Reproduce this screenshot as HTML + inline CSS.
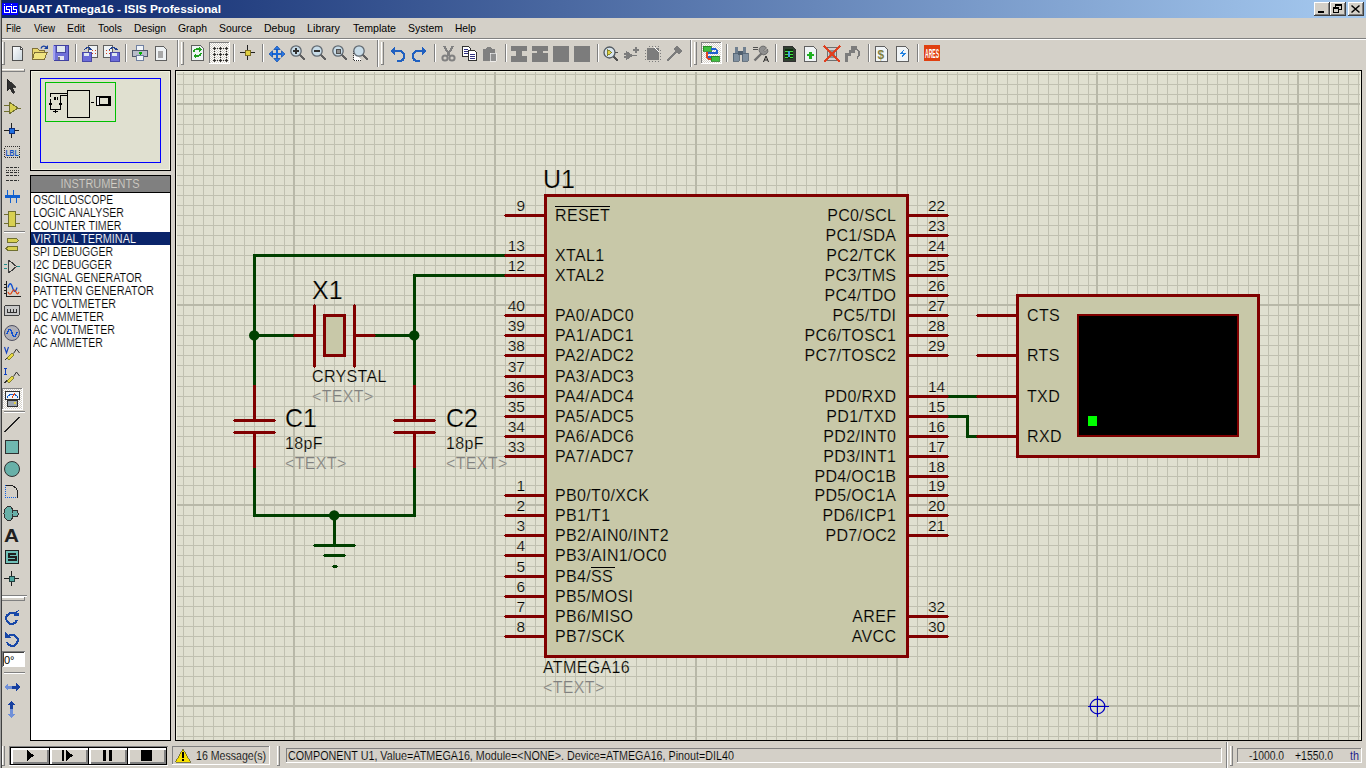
<!DOCTYPE html>
<html><head><meta charset="utf-8"><title>UART ATmega16 - ISIS Professional</title>
<style>html,body{margin:0;padding:0;width:1366px;height:768px;overflow:hidden;background:#D4D0C8}
svg{display:block} text{font-family:"Liberation Sans",sans-serif}</style></head>
<body><svg width="1366" height="768" viewBox="0 0 1366 768" shape-rendering="crispEdges">
<rect x="0" y="0" width="1366" height="768" fill="#D4D0C8" />
<defs><linearGradient id="tg" x1="0" x2="1" y1="0" y2="0"><stop offset="0" stop-color="#0A246A"/><stop offset="1" stop-color="#A6CAF0"/></linearGradient></defs>
<rect x="2" y="0" width="1364" height="18" fill="url(#tg)" />
<rect x="0" y="0" width="1" height="768" fill="#A0A0A0"/>
<rect x="1" y="0" width="1" height="768" fill="#404040"/>
<rect x="2" y="3" width="16" height="12" fill="#0000FF" />
<path d="M4 4h1v1h-1zM11 4h1v1h-1zM4 6h1v7h-1zM4 12h6v1h-6zM6 6h6v1h-6zM6 6h1v4h-1zM6 9h4v1h-4zM9 9h1v4h-1zM11 6h1v7h-1zM11 12h6v1h-6zM13 6h4v1h-4zM13 6h1v4h-1zM13 9h4v1h-4zM16 9h1v4h-1z" fill="#fff"/>
<text x="19" y="13" font-size="11" fill="#FFFFFF" text-anchor="start" font-weight="bold" textLength="202" lengthAdjust="spacingAndGlyphs" >UART ATmega16 - ISIS Professional</text>
<rect x="1314" y="2" width="16" height="14" fill="#D4D0C8" />
<rect x="1314" y="2" width="15" height="1" fill="#FFFFFF"/>
<rect x="1314" y="2" width="1" height="13" fill="#FFFFFF"/>
<rect x="1314" y="15" width="16" height="1" fill="#404040"/>
<rect x="1329" y="2" width="1" height="14" fill="#404040"/>
<rect x="1315" y="14" width="14" height="1" fill="#808080"/>
<rect x="1328" y="3" width="1" height="12" fill="#808080"/>
<rect x="1330" y="2" width="16" height="14" fill="#D4D0C8" />
<rect x="1330" y="2" width="15" height="1" fill="#FFFFFF"/>
<rect x="1330" y="2" width="1" height="13" fill="#FFFFFF"/>
<rect x="1330" y="15" width="16" height="1" fill="#404040"/>
<rect x="1345" y="2" width="1" height="14" fill="#404040"/>
<rect x="1331" y="14" width="14" height="1" fill="#808080"/>
<rect x="1344" y="3" width="1" height="12" fill="#808080"/>
<rect x="1348" y="2" width="16" height="14" fill="#D4D0C8" />
<rect x="1348" y="2" width="15" height="1" fill="#FFFFFF"/>
<rect x="1348" y="2" width="1" height="13" fill="#FFFFFF"/>
<rect x="1348" y="15" width="16" height="1" fill="#404040"/>
<rect x="1363" y="2" width="1" height="14" fill="#404040"/>
<rect x="1349" y="14" width="14" height="1" fill="#808080"/>
<rect x="1362" y="3" width="1" height="12" fill="#808080"/>
<rect x="1318" y="11" width="6" height="2" fill="#000"/>
<path d="M1335 4h7v2h-7zM1341 6h1v4h-3v-1h2zM1335 6h1v1h-1zM1333 7h6v2h-6zM1333 9h1v4h-1zM1338 9h1v4h-1zM1333 12h6v1h-6z" fill="#000"/>
<path d="M1351.5 5.5l8 7M1359.5 5.5l-8 7" stroke="#000" stroke-width="1.5" shape-rendering="auto"/>
<text x="6" y="32" font-size="11" fill="#000" text-anchor="start" font-weight="normal" textLength="15" lengthAdjust="spacingAndGlyphs" >File</text>
<text x="34" y="32" font-size="11" fill="#000" text-anchor="start" font-weight="normal" textLength="21" lengthAdjust="spacingAndGlyphs" >View</text>
<text x="67" y="32" font-size="11" fill="#000" text-anchor="start" font-weight="normal" textLength="18" lengthAdjust="spacingAndGlyphs" >Edit</text>
<text x="98" y="32" font-size="11" fill="#000" text-anchor="start" font-weight="normal" textLength="24" lengthAdjust="spacingAndGlyphs" >Tools</text>
<text x="134" y="32" font-size="11" fill="#000" text-anchor="start" font-weight="normal" textLength="32" lengthAdjust="spacingAndGlyphs" >Design</text>
<text x="178" y="32" font-size="11" fill="#000" text-anchor="start" font-weight="normal" textLength="29" lengthAdjust="spacingAndGlyphs" >Graph</text>
<text x="219" y="32" font-size="11" fill="#000" text-anchor="start" font-weight="normal" textLength="33" lengthAdjust="spacingAndGlyphs" >Source</text>
<text x="264" y="32" font-size="11" fill="#000" text-anchor="start" font-weight="normal" textLength="31" lengthAdjust="spacingAndGlyphs" >Debug</text>
<text x="307" y="32" font-size="11" fill="#000" text-anchor="start" font-weight="normal" textLength="33" lengthAdjust="spacingAndGlyphs" >Library</text>
<text x="353" y="32" font-size="11" fill="#000" text-anchor="start" font-weight="normal" textLength="43" lengthAdjust="spacingAndGlyphs" >Template</text>
<text x="408" y="32" font-size="11" fill="#000" text-anchor="start" font-weight="normal" textLength="35" lengthAdjust="spacingAndGlyphs" >System</text>
<text x="455" y="32" font-size="11" fill="#000" text-anchor="start" font-weight="normal" textLength="21" lengthAdjust="spacingAndGlyphs" >Help</text>
<rect x="2" y="38" width="1364" height="1" fill="#808080"/>
<rect x="2" y="39" width="1364" height="1" fill="#FFFFFF"/>
<rect x="2" y="42" width="1" height="23" fill="#FFFFFF"/>
<rect x="4" y="42" width="1" height="23" fill="#808080"/>
<rect x="2" y="64" width="3" height="1" fill="#808080"/>
<g transform="translate(11,46)"><defs><linearGradient id="dg" x1="0" y1="0" x2="1" y2="1"><stop offset="0" stop-color="#FFFFFF"/><stop offset="1" stop-color="#C8D4DC"/></linearGradient></defs><path d="M1.5 0.5h7.5l2.5 2.5v11.5h-10z" fill="url(#dg)" stroke="#505050"/><path d="M9 1v2.5h2.5" fill="none" stroke="#505050"/><rect x="9.5" y="1.5" width="1" height="1" fill="#fff"/></g>
<g transform="translate(32,45)"><path d="M0.5 3.5h5l1.5 1.5h5.5v9h-12z" fill="#E8D870" stroke="#807038"/><path d="M2.5 7.5h12.5l-2.5 7h-12z" fill="#F0E480" stroke="#807038"/><path d="M9 3.5C10 0.5 13 0.5 14.5 2.5" stroke="#1840A0" fill="none" stroke-width="1.3" shape-rendering="auto"/><path d="M12 4h4v-4z" fill="#1840A0" shape-rendering="auto"/></g>
<g transform="translate(53,45)"><path d="M0 0h16v16h-15l-1-1z" fill="#7070D8"/><path d="M0 0h1.5v15h-1.5z" fill="#A0A0F0"/><rect x="3.5" y="0.5" width="9" height="7" fill="#E0E8EE" stroke="#4848A0"/><rect x="4.5" y="11" width="6" height="5" fill="#E8E8F0"/><rect x="5" y="12" width="2" height="3" fill="#707080"/><path d="M0.5 0.5h15v15h-14.5" fill="none" stroke="#4040A0"/></g>
<rect x="75" y="44" width="1" height="18" fill="#808080"/>
<rect x="76" y="44" width="1" height="18" fill="#FFFFFF"/>
<g transform="translate(82,45)"><rect x="6.5" y="0.5" width="9" height="12" fill="#EEF2F4" stroke="#606060"/><g fill="#D04020"><rect x="10" y="5" width="1" height="1"/><rect x="13" y="5" width="1" height="1"/><rect x="10" y="8" width="1" height="1"/><rect x="13" y="8" width="1" height="1"/></g><path d="M0 7h9v9h-9z" fill="#6C6CD8" stroke="#4848A8"/><rect x="2" y="8" width="5" height="3" fill="#E0E8F0"/><path d="M2 5c2-3 5-3 7-1" stroke="#204090" fill="none" stroke-width="1.3"/><path d="M8 2l2 3h-3z" fill="#204090"/></g>
<g transform="translate(103,45)"><rect x="0.5" y="0.5" width="9" height="12" fill="#EEF2F4" stroke="#606060"/><g fill="#D04020"><rect x="3" y="5" width="1" height="1"/><rect x="6" y="5" width="1" height="1"/><rect x="3" y="8" width="1" height="1"/><rect x="6" y="8" width="1" height="1"/></g><path d="M7 7h9v9h-9z" fill="#6C6CD8" stroke="#4848A8"/><rect x="9" y="8" width="5" height="3" fill="#E0E8F0"/><path d="M6 5c2-3 5-3 7-1" stroke="#204090" fill="none" stroke-width="1.3"/><path d="M14 2l1 3h-3z" fill="#204090"/></g>
<rect x="125" y="44" width="1" height="18" fill="#808080"/>
<rect x="126" y="44" width="1" height="18" fill="#FFFFFF"/>
<g transform="translate(132,45)"><rect x="4.5" y="0.5" width="7" height="5" fill="#F0F4F8" stroke="#7080A0"/><rect x="0.5" y="5.5" width="15" height="6" fill="#B8BCC8" stroke="#505868"/><rect x="4.5" y="10.5" width="7" height="5" fill="#F0F4F8" stroke="#7080A0"/><path d="M7 8h3M8.5 6.5v3" stroke="#00B000" stroke-width="1.4"/></g>
<g transform="translate(155,46)"><path d="M0.5 0.5h8l3 3v11h-11z" fill="#EEF2F4" stroke="#606060"/><rect x="3" y="5" width="5" height="7" fill="#A8A8A8"/></g>
<rect x="177" y="40" width="1" height="27" fill="#808080"/>
<rect x="178" y="40" width="1" height="27" fill="#FFFFFF"/>
<rect x="181" y="42" width="1" height="23" fill="#FFFFFF"/>
<rect x="183" y="42" width="1" height="23" fill="#808080"/>
<rect x="181" y="64" width="3" height="1" fill="#808080"/>
<g transform="translate(191,45)"><path d="M0.5 0.5h9l3 3v12h-12z" fill="#EEF4F6" stroke="#606060"/><path d="M3 7c0-3 4-4 6-2M10 8c0 3-4 4-6 2" stroke="#20A020" fill="none" stroke-width="1.6"/><path d="M8 2l3 3l-3 2z M5 9l-3 2l3 2z" fill="#20A020"/></g>
<g transform="translate(209,42)"><defs><pattern id="dith" width="2" height="2" patternUnits="userSpaceOnUse"><rect width="2" height="2" fill="#D4D0C8"/><rect width="1" height="1" fill="#fff"/><rect x="1" y="1" width="1" height="1" fill="#fff"/></pattern></defs><rect x="0" y="0" width="21" height="22" fill="url(#dith)"/><path d="M0 0.5h20.5M0.5 0v21.5" stroke="#808080"/><path d="M0 21.5h21M20.5 0v22" stroke="#fff"/></g>
<g fill="#303030"><rect x="213" y="48" width="3" height="1"/><rect x="214" y="47" width="1" height="3"/><rect x="213" y="54" width="3" height="1"/><rect x="214" y="53" width="1" height="3"/><rect x="213" y="60" width="3" height="1"/><rect x="214" y="59" width="1" height="3"/><rect x="219" y="48" width="3" height="1"/><rect x="220" y="47" width="1" height="3"/><rect x="219" y="54" width="3" height="1"/><rect x="220" y="53" width="1" height="3"/><rect x="219" y="60" width="3" height="1"/><rect x="220" y="59" width="1" height="3"/><rect x="225" y="48" width="3" height="1"/><rect x="226" y="47" width="1" height="3"/><rect x="225" y="54" width="3" height="1"/><rect x="226" y="53" width="1" height="3"/><rect x="225" y="60" width="3" height="1"/><rect x="226" y="59" width="1" height="3"/><rect x="214" y="51" width="1" height="1"/><rect x="217" y="48" width="1" height="1"/><rect x="223" y="48" width="1" height="1"/><rect x="214" y="57" width="1" height="1"/><rect x="220" y="51" width="1" height="1"/><rect x="217" y="54" width="1" height="1"/><rect x="223" y="54" width="1" height="1"/><rect x="220" y="57" width="1" height="1"/><rect x="226" y="51" width="1" height="1"/><rect x="217" y="60" width="1" height="1"/><rect x="223" y="60" width="1" height="1"/><rect x="226" y="57" width="1" height="1"/></g>
<rect x="233" y="44" width="1" height="18" fill="#808080"/>
<rect x="234" y="44" width="1" height="18" fill="#FFFFFF"/>
<g transform="translate(240,45)"><path d="M0 7.5h15M7.5 0v15" stroke="#202020"/><rect x="5" y="5" width="5" height="5" fill="#E0D040" stroke="#807020"/></g>
<rect x="262" y="44" width="1" height="18" fill="#808080"/>
<rect x="263" y="44" width="1" height="18" fill="#FFFFFF"/>
<g transform="translate(269,46)"><path d="M3 7h9v2h-9zM7 3h2v9h-2z" fill="#1868D8"/><path d="M8 0l3.2 3.5h-6.4zM8 16l3.2-3.5h-6.4zM0 8l3.5-3.2v6.4zM16 8l-3.5-3.2v6.4z" fill="#2878E8" stroke="#0848A8" stroke-width="0.7" shape-rendering="auto"/></g>
<g transform="translate(290,45)"><path d="M10 10l5 5" stroke="#606060" stroke-width="2.5"/><circle shape-rendering="auto" cx="6" cy="6" r="5.2" fill="#C8DCE8" stroke="#606870" stroke-width="1.3"/><path d="M3 6h6M6 3v6" stroke="#303030" stroke-width="1.5"/></g>
<g transform="translate(311,45)"><path d="M10 10l5 5" stroke="#606060" stroke-width="2.5"/><circle shape-rendering="auto" cx="6" cy="6" r="5.2" fill="#C8DCE8" stroke="#606870" stroke-width="1.3"/><path d="M3 6h6" stroke="#303030" stroke-width="1.5"/></g>
<g transform="translate(332,45)"><path d="M10 10l5 5" stroke="#606060" stroke-width="2.5"/><circle shape-rendering="auto" cx="6" cy="6" r="5.2" fill="#C8DCE8" stroke="#606870" stroke-width="1.3"/><rect x="4" y="4" width="4" height="4" fill="#909090" stroke="#505050"/></g>
<g transform="translate(353,45)"><path d="M0.5 5.5v10h8" fill="#fff" stroke="#303030" stroke-dasharray="1 1"/><path d="M10 10l5 5" stroke="#606060" stroke-width="2.5"/><circle shape-rendering="auto" cx="6" cy="6" r="5.2" fill="#C8DCE8" stroke="#606870" stroke-width="1.3"/></g>
<rect x="377" y="40" width="1" height="27" fill="#808080"/>
<rect x="378" y="40" width="1" height="27" fill="#FFFFFF"/>
<rect x="381" y="42" width="1" height="23" fill="#FFFFFF"/>
<rect x="383" y="42" width="1" height="23" fill="#808080"/>
<rect x="381" y="64" width="3" height="1" fill="#808080"/>
<g transform="translate(390,46)"><g ><path d="M3 5h6c3 0 5 2 5 5c0 3-2 5-5 5h-2" fill="none" stroke="#2060C0" stroke-width="2.4"/><path d="M0 5l5-4v8z" fill="#2060C0"/></g></g>
<g transform="translate(411,46)"><g transform="translate(16,0) scale(-1,1)"><path d="M3 5h6c3 0 5 2 5 5c0 3-2 5-5 5h-2" fill="none" stroke="#2060C0" stroke-width="2.4"/><path d="M0 5l5-4v8z" fill="#2060C0"/></g></g>
<rect x="434" y="44" width="1" height="18" fill="#808080"/>
<rect x="435" y="44" width="1" height="18" fill="#FFFFFF"/>
<g transform="translate(441,46)"><path d="M3 0l6 10M12 0l-6 10" stroke="#808080" stroke-width="2.2"/><circle shape-rendering="auto" cx="4" cy="12" r="2.6" fill="none" stroke="#808080" stroke-width="2"/><circle shape-rendering="auto" cx="11" cy="12" r="2.6" fill="none" stroke="#808080" stroke-width="2"/></g>
<g transform="translate(462,46)"><path d="M0.5 0.5h6l2 2v8h-8z" fill="#fff" stroke="#303030"/><path d="M6.5 4.5h6l2 2v8h-8z" fill="#fff" stroke="#303030"/><path d="M2 3h4M2 5h4M2 7h4M8 8h5M8 10h5M8 12h5" stroke="#303080"/></g>
<g transform="translate(482,46)"><path d="M1 3h3l1-2h4l1 2h3v12h-12z" fill="#808080"/><path d="M8 7h6v8h-6z" fill="#909090" stroke="#fff" stroke-width="0.6"/></g>
<rect x="505" y="44" width="1" height="18" fill="#808080"/>
<rect x="506" y="44" width="1" height="18" fill="#FFFFFF"/>
<g transform="translate(511,46)"><path d="M0 0h16v5h-5v5h5v6h-16v-6h5v-5h-5z" fill="#7C7C7C"/></g>
<g transform="translate(532,46)"><path d="M0 0h16v5h-5v2h5v9h-16v-9h5v-2h-5z" fill="#7C7C7C"/></g>
<g transform="translate(553,46)"><path d="M0 0h16v16h-16z" fill="#7C7C7C"/></g>
<g transform="translate(574,46)"><path d="M0 0h16v16h-16z" fill="#7C7C7C"/></g>
<rect x="597" y="44" width="1" height="18" fill="#808080"/>
<rect x="598" y="44" width="1" height="18" fill="#FFFFFF"/>
<g transform="translate(603,46)"><path d="M10 10l5 5" stroke="#505050" stroke-width="2.4"/><circle shape-rendering="auto" cx="6.5" cy="6.5" r="5.5" fill="#D8E4EC" stroke="#505860" stroke-width="1.3"/><path d="M4 3.5v6l5-3z" fill="#E0D040" stroke="#707020" stroke-width="0.8"/><path d="M12 6.5h3" stroke="#505050"/></g>
<g transform="translate(624,46)"><path d="M2 5v9l8-4.5z" fill="#7C7C7C"/><path d="M0 8h3M0 11h3M10 9.5h3M12 1v6M9 4h6" stroke="#7C7C7C" stroke-width="1.6"/></g>
<g transform="translate(645,46)"><rect x="2" y="2" width="12" height="12" fill="#7C7C7C"/><path d="M0 4h16M0 7h16M0 10h16M0 13h16M4 0v16M7 0v16M10 0v16M13 0v16" stroke="#7C7C7C" stroke-dasharray="1 2"/><path d="M9 1l5 5" stroke="#fff" stroke-width="1"/></g>
<g transform="translate(666,46)"><path d="M1 15l10-10" stroke="#7C7C7C" stroke-width="2.6"/><path d="M7 3l4-3l5 5l-3 4z" fill="#7C7C7C"/></g>
<rect x="690" y="40" width="1" height="27" fill="#808080"/>
<rect x="691" y="40" width="1" height="27" fill="#FFFFFF"/>
<rect x="694" y="42" width="1" height="23" fill="#FFFFFF"/>
<rect x="696" y="42" width="1" height="23" fill="#808080"/>
<rect x="694" y="64" width="3" height="1" fill="#808080"/>
<g transform="translate(701,42)"><rect x="0" y="0" width="21" height="22" fill="url(#dith)"/><path d="M0 0.5h20.5M0.5 0v21.5" stroke="#808080"/><path d="M0 21.5h21M20.5 0v22" stroke="#fff"/></g>
<g transform="translate(703,45)"><rect x="0" y="1" width="8" height="5" fill="#40C040" stroke="#208020" stroke-width="0.8"/><rect x="8" y="11" width="8" height="5" fill="#40C040" stroke="#208020" stroke-width="0.8"/><path d="M8 4h4a2 2 0 0 1 2 2v2h-8a2 2 0 0 0-2 2v2h4" fill="none" stroke="#2060D0" stroke-width="1.5"/><path d="M4 7v5a2 2 0 0 0 2 2h2" fill="none" stroke="#E04020" stroke-width="1.5"/></g>
<rect x="726" y="44" width="1" height="18" fill="#808080"/>
<rect x="727" y="44" width="1" height="18" fill="#FFFFFF"/>
<g transform="translate(733,46)"><path d="M2 1h3v6h-3zM10 1h3v6h-3z" fill="#708090"/><path d="M0 7h6v8h-6zM9 7h6v8h-6z" fill="#8090A0" stroke="#506070" stroke-width="0.8"/><rect x="5" y="5" width="5" height="4" fill="#506070"/></g>
<g transform="translate(753,46)"><path d="M0 1.5h5M0 3.5h5" stroke="#505050"/><path d="M1.5 14.5l7-7" stroke="#707070" stroke-width="2.4" shape-rendering="auto"/><path d="M8 7.5a4 4 0 1 1 5.5-5.5l-2.5 2.5l1 1l2.5-2.5a4 4 0 0 1-6.5 4.5z" fill="#909090" stroke="#606060" stroke-width="0.8" shape-rendering="auto"/><path d="M10.5 16l2.5-6l2.5 6M11.5 14h3" stroke="#202020" fill="none" shape-rendering="auto"/></g>
<rect x="775" y="44" width="1" height="18" fill="#808080"/>
<rect x="776" y="44" width="1" height="18" fill="#FFFFFF"/>
<g transform="translate(783,46)"><path d="M0.5 0.5h9l3 3v12h-12z" fill="#304030" stroke="#303030"/><rect x="2" y="3" width="8" height="10" fill="#103010"/><path d="M2 5h3M2 8h8M2 11h3M7 5h3M7 11h3" stroke="#40E040"/><rect x="5" y="5" width="2" height="6" fill="#40A0E0"/></g>
<g transform="translate(804,46)"><path d="M0.5 0.5h9l3 3v12h-12z" fill="#F0F4F6" stroke="#606060"/><path d="M3 9h7M6.5 5.5v7" stroke="#20B020" stroke-width="2.2"/></g>
<g transform="translate(824,46)"><rect x="3.5" y="1.5" width="9" height="13" fill="#D0D0D0" stroke="#707070"/><rect x="5" y="4" width="6" height="8" fill="#909090"/><path d="M0 0l16 16M16 0l-16 16" stroke="#E04020" stroke-width="1.8"/></g>
<g transform="translate(845,46)"><path d="M6 0h6v4h-2v3h-4v3h-3v6h-3v-9h4v-3h2z" fill="#7C7C7C"/><path d="M12 4c3 1 3 6 0 8" stroke="#7C7C7C" fill="none" stroke-width="1.5"/></g>
<rect x="868" y="44" width="1" height="18" fill="#808080"/>
<rect x="869" y="44" width="1" height="18" fill="#FFFFFF"/>
<g transform="translate(875,46)"><path d="M0.5 0.5h9l3 3v12h-12z" fill="#F0F4F6" stroke="#606060"/><text x="2.5" y="13" font-size="12" font-weight="bold" fill="#808040" font-family="Liberation Sans">$</text></g>
<g transform="translate(896,46)"><path d="M0.5 0.5h9l3 3v12h-12z" fill="#F0F4F6" stroke="#606060"/><path d="M8 3l-4 5h3l-2 5l5-6h-3z" fill="#2080E0"/></g>
<rect x="917" y="44" width="1" height="18" fill="#808080"/>
<rect x="918" y="44" width="1" height="18" fill="#FFFFFF"/>
<g transform="translate(924,45)"><rect x="0" y="0" width="16" height="16" fill="#E04010"/><text x="8" y="13" font-size="12" font-weight="bold" fill="#fff" text-anchor="middle" font-family="Liberation Sans" textLength="14" lengthAdjust="spacingAndGlyphs">ARES</text></g>
<rect x="2" y="69" width="23" height="1" fill="#FFFFFF"/>
<rect x="2" y="71" width="23" height="1" fill="#808080"/>
<rect x="24" y="69" width="1" height="3" fill="#808080"/>
<g transform="translate(4,79)"><path d="M3 0v12l3-3l2.5 5l2-1l-2.5-5h4z" fill="#303030" stroke="#202020" stroke-width="0.8"/></g>
<g transform="translate(4,101)"><path d="M5 1v12l9-6z" fill="#D8D050" stroke="#707030"/><path d="M0 4h5M0 10h5M14 7h3" stroke="#707030"/></g>
<g transform="translate(4,123)"><path d="M0 7.5h15M7.5 0v15" stroke="#202020"/><rect x="5" y="5" width="5" height="5" fill="#2070E0" stroke="#103080"/></g>
<g transform="translate(4,146)"><rect x="0.5" y="0.5" width="15" height="11" fill="none" stroke="#303030" stroke-dasharray="1 1"/><text x="8" y="10" font-size="9" font-weight="bold" fill="#1050C0" text-anchor="middle" font-family="Liberation Sans" textLength="13" lengthAdjust="spacingAndGlyphs">LBL</text></g>
<g transform="translate(5,166)"><path d="M1 1.5h13M1 6.5h13M1 9.5h13M1 14.5h13" stroke="#303030" stroke-width="1.2" stroke-dasharray="3 1"/><path d="M1 4h13" stroke="#303030" stroke-width="1" stroke-dasharray="1 1"/></g>
<g transform="translate(4,190)"><rect x="1" y="5" width="15" height="3" fill="#1060D0"/><path d="M3.5 0v5M9.5 0v5M6.5 8v5M12.5 8v5" stroke="#1060D0" stroke-width="1.3"/></g>
<g transform="translate(4,211)"><rect x="4.5" y="0.5" width="7" height="15" fill="#D8D050" stroke="#707030"/><path d="M0 3h4M0 12h4M12 3h4M12 12h4" stroke="#707030"/></g>
<rect x="4" y="231" width="21" height="1" fill="#808080"/>
<rect x="4" y="232" width="21" height="1" fill="#FFFFFF"/>
<g transform="translate(4,238)"><path d="M3.5 0.5h9l2 2l-2 2h-9z" fill="#D8D050" stroke="#707030"/><path d="M13 8.5h-9l-2 2l2 2h9z" fill="#D8D050" stroke="#707030"/></g>
<g transform="translate(4,260)"><path d="M4.5 0v13M4.5 0l8 6.5l-8 6.5" fill="none" stroke="#404040" stroke-width="1.2"/><path d="M0 4.5h3M0 8.5h3M13 6.5h3" stroke="#209090" stroke-width="1.2"/></g>
<g transform="translate(4,281)"><path d="M2.5 0v15.5h14" stroke="#202020" fill="none"/><path d="M0 3h2M0 6h2M0 9h2M0 12h2M5 16v-1M8 16v-1M11 16v-1M14 16v-1" stroke="#202020"/><path d="M4 6.5c1.5-5 3-5 4.5 0s3 5 4.5 0" stroke="#1050D0" fill="none" stroke-width="1.3" shape-rendering="auto"/><path d="M4 11c1.5 3 2.5 3 4 0s2.5-3 4 0s2 2 3 0" stroke="#E04010" fill="none" stroke-width="1.2" shape-rendering="auto"/></g>
<g transform="translate(4,305)"><rect x="0.5" y="0.5" width="15" height="10" rx="1.5" fill="#C8C8C8" stroke="#404040"/><path d="M3.5 4v3h3v-3M9.5 4v3h3v-3M6 7h4" stroke="#303030" fill="none"/></g>
<g transform="translate(4,325)"><circle shape-rendering="auto" cx="8" cy="8" r="7.5" fill="#B0B0B8" stroke="#505060"/><path d="M3 9c2-6 4-6 5-1s3 5 5-1" stroke="#1050D0" fill="none" stroke-width="1.5"/></g>
<g transform="translate(4,347)"><path d="M0.5 0l2 6l2-6" stroke="#1040C0" fill="none" stroke-width="1.1" shape-rendering="auto"/><path d="M0.5 13.5l3-3" stroke="#303030"/><path d="M3 11l5-5l2 2l-5 5z" fill="#E8D840" stroke="#707020" stroke-width="0.8" shape-rendering="auto"/><path d="M9.5 6.5l3-4.5l3 4" stroke="#303030" fill="none" shape-rendering="auto"/></g>
<g transform="translate(4,368)"><path d="M0 0.5h3M1.5 0.5v6M0 6.5h3" stroke="#1040C0" stroke-width="1.1"/><path d="M0.5 15l3-3" stroke="#303030"/><path d="M3 13l5-5l2 2l-5 5z" fill="#E8D840" stroke="#707020" stroke-width="0.8" shape-rendering="auto"/><path d="M9.5 8.5l3-4.5l3 4" stroke="#303030" fill="none" shape-rendering="auto"/></g>
<g transform="translate(2,388)"><rect x="0" y="0" width="21" height="22" fill="url(#dith)"/><path d="M0 0.5h20.5M0.5 0v21.5" stroke="#808080"/><path d="M0 21.5h21M20.5 0v22" stroke="#fff"/><rect x="3.5" y="3.5" width="14" height="8" fill="#F0F4F8" stroke="#303030"/><path d="M5 10c2-5 9-5 11 0" stroke="#1060D0" fill="none"/><path d="M10 10l3-5" stroke="#E04010"/><rect x="5.5" y="12.5" width="10" height="6" fill="#A0A8B0" stroke="#303030"/><rect x="12" y="14" width="2" height="2" fill="#E0D040"/></g>
<rect x="4" y="411" width="21" height="1" fill="#808080"/>
<rect x="4" y="412" width="21" height="1" fill="#FFFFFF"/>
<g transform="translate(4,417)"><path d="M0.5 15l15-15" stroke="#202020" stroke-width="1.3"/></g>
<g transform="translate(5,440)"><rect x="0.5" y="0.5" width="13" height="13" fill="#70B8B0" stroke="#303030"/></g>
<g transform="translate(4,461)"><circle shape-rendering="auto" cx="8" cy="8" r="7.5" fill="#68B0A8" stroke="#303030"/></g>
<g transform="translate(5,485)"><path d="M0.5 0.5h5a7 7 0 0 1 7 7v5h-12z" fill="none" stroke="#1060E0" stroke-dasharray="1 1"/><path d="M0.5 0.5h5a7 7 0 0 1 7 7v5" fill="none" stroke="#202020"/></g>
<g transform="translate(4,506)"><path d="M5 0.5c3 0 4 3 3 6c1-3 6-3 6 0v2c0 3-5 3-6 0c1 3 0 6-3 6c-3 0-5-3-5-7s2-7 5-7z" fill="#68B0A8" stroke="#303030"/></g>
<text x="4" y="542" font-size="19" font-weight="bold" fill="#202020" font-family="Liberation Serif" textLength="15" lengthAdjust="spacingAndGlyphs">A</text>
<g transform="translate(5,550)"><rect x="0.5" y="0.5" width="13" height="13" fill="#70C0B8" stroke="#202020"/><path d="M11 3.5h-7.5v3h7v3h-7.5" stroke="#202020" fill="none" stroke-width="2"/></g>
<g transform="translate(4,571)"><path d="M0 7.5h15M7.5 0v15" stroke="#202020"/><rect x="5" y="5" width="5" height="5" fill="#50A8A0" stroke="#204040"/></g>
<rect x="2" y="595" width="25" height="1" fill="#808080"/>
<rect x="2" y="596" width="25" height="1" fill="#FFFFFF"/>
<rect x="2" y="597" width="23" height="1" fill="#FFFFFF"/>
<rect x="2" y="600" width="23" height="1" fill="#808080"/>
<rect x="24" y="597" width="1" height="4" fill="#808080"/>
<g transform="translate(4,610)"><path d="M12 5a5.5 5.5 0 1 0 1 5" stroke="#1848A8" fill="none" stroke-width="2.2"/><path d="M9 3h6v-3z M15 0v6h-6z" fill="#1848A8"/></g>
<g transform="translate(4,632)"><path d="M4 5a5.5 5.5 0 1 1 -1 5" stroke="#1848A8" fill="none" stroke-width="2.2"/><path d="M1 0v6h6z" fill="#1848A8"/></g>
<rect x="2" y="651" width="23" height="16" fill="#FFFFFF" />
<rect x="2" y="651" width="23" height="1" fill="#808080"/>
<rect x="2" y="651" width="1" height="16" fill="#808080"/>
<rect x="3" y="652" width="21" height="1" fill="#404040"/>
<rect x="3" y="652" width="1" height="14" fill="#404040"/>
<text x="4" y="664" font-size="11" fill="#000" text-anchor="start" font-weight="normal" >0°</text>
<rect x="4" y="672" width="21" height="1" fill="#808080"/>
<rect x="4" y="673" width="21" height="1" fill="#FFFFFF"/>
<g transform="translate(4,682)"><path d="M0 5l4-4v2.5h8v-2.5l4 4l-4 4v-2.5h-8v2.5z" fill="#7090D8"/><path d="M8 3.5h4v-2.5l4 4l-4 4v-2.5h-4z" fill="#1840A0"/></g>
<g transform="translate(7,701)"><path d="M4 0l4 4h-2.5v9h2.5l-4 4l-4-4h2.5v-9h-2.5z" fill="#1840A0"/><path d="M2.5 8h3v5h2.5l-4 4l-4-4h2.5z" fill="#7090D8"/></g>
<rect x="30" y="70" width="141" height="101" fill="#000000" />
<rect x="31" y="71" width="139" height="99" fill="#F2F2E2" />
<rect x="32" y="72" width="137" height="97" fill="#E0E0D0" />
<rect x="40.5" y="78.5" width="120" height="84" fill="none" stroke="#0000FF"/>
<rect x="45.5" y="82.5" width="70" height="39" fill="none" stroke="#00C000"/>
<g fill="none" stroke="#000" stroke-width="1"><rect x="67.5" y="90.5" width="22" height="27"/><path d="M50.5 97v-4h16M60.5 109.5v-14h6M50.5 99v10.5h10M55.5 109.5v2"/><path d="M53 111.5h5M55.5 110v3"/></g>
<path d="M54 97h2v3h-2zM57 97h1v3h-1zM49 103h3v2h-3zM59 103h3v2h-3z" fill="#000"/>
<path d="M91 102h2l1 1h-3z" fill="#000"/>
<rect x="96" y="96" width="15" height="10" fill="#000"/><rect x="97" y="97" width="2" height="8" fill="#F0F0F0"/><rect x="100" y="98" width="8" height="6" fill="#E0E0D0"/>
<rect x="30" y="175" width="141" height="566" fill="#000000" />
<rect x="31" y="176" width="139" height="16" fill="#808080" />
<text x="100" y="188" font-size="12.5" fill="#D4D0C8" text-anchor="middle" font-weight="normal" textLength="79" lengthAdjust="spacingAndGlyphs" stroke="#808080" stroke-width="0.15">INSTRUMENTS</text>
<rect x="31" y="193" width="139" height="547" fill="#FFFFFF" />
<text x="33" y="204" font-size="12.5" fill="#000" text-anchor="start" font-weight="normal" textLength="80" lengthAdjust="spacingAndGlyphs" stroke="#FFFFFF" stroke-width="0.15">OSCILLOSCOPE</text>
<text x="33" y="217" font-size="12.5" fill="#000" text-anchor="start" font-weight="normal" textLength="91" lengthAdjust="spacingAndGlyphs" stroke="#FFFFFF" stroke-width="0.15">LOGIC ANALYSER</text>
<text x="33" y="230" font-size="12.5" fill="#000" text-anchor="start" font-weight="normal" textLength="88.5" lengthAdjust="spacingAndGlyphs" stroke="#FFFFFF" stroke-width="0.15">COUNTER TIMER</text>
<rect x="31" y="232" width="139" height="13" fill="#0A246A" />
<text x="33" y="243" font-size="12.5" fill="#FFFFFF" text-anchor="start" font-weight="normal" textLength="103" lengthAdjust="spacingAndGlyphs" stroke="#0A246A" stroke-width="0.15">VIRTUAL TERMINAL</text>
<text x="33" y="256" font-size="12.5" fill="#000" text-anchor="start" font-weight="normal" textLength="80" lengthAdjust="spacingAndGlyphs" stroke="#FFFFFF" stroke-width="0.15">SPI DEBUGGER</text>
<text x="33" y="269" font-size="12.5" fill="#000" text-anchor="start" font-weight="normal" textLength="79" lengthAdjust="spacingAndGlyphs" stroke="#FFFFFF" stroke-width="0.15">I2C DEBUGGER</text>
<text x="33" y="282" font-size="12.5" fill="#000" text-anchor="start" font-weight="normal" textLength="109" lengthAdjust="spacingAndGlyphs" stroke="#FFFFFF" stroke-width="0.15">SIGNAL GENERATOR</text>
<text x="33" y="295" font-size="12.5" fill="#000" text-anchor="start" font-weight="normal" textLength="121" lengthAdjust="spacingAndGlyphs" stroke="#FFFFFF" stroke-width="0.15">PATTERN GENERATOR</text>
<text x="33" y="308" font-size="12.5" fill="#000" text-anchor="start" font-weight="normal" textLength="83" lengthAdjust="spacingAndGlyphs" stroke="#FFFFFF" stroke-width="0.15">DC VOLTMETER</text>
<text x="33" y="321" font-size="12.5" fill="#000" text-anchor="start" font-weight="normal" textLength="71" lengthAdjust="spacingAndGlyphs" stroke="#FFFFFF" stroke-width="0.15">DC AMMETER</text>
<text x="33" y="334" font-size="12.5" fill="#000" text-anchor="start" font-weight="normal" textLength="82" lengthAdjust="spacingAndGlyphs" stroke="#FFFFFF" stroke-width="0.15">AC VOLTMETER</text>
<text x="33" y="347" font-size="12.5" fill="#000" text-anchor="start" font-weight="normal" textLength="70" lengthAdjust="spacingAndGlyphs" stroke="#FFFFFF" stroke-width="0.15">AC AMMETER</text>
<rect x="175" y="70" width="1187" height="671" fill="#000000" />
<rect x="176" y="71" width="1185" height="669" fill="#F0F0E0" />
<rect x="177" y="72" width="1183" height="668" fill="#E0E0D0" />
<path d="M183 72h1V740h-1z M193 72h1V740h-1z M203 72h1V740h-1z M213 72h1V740h-1z M223 72h1V740h-1z M234 72h1V740h-1z M244 72h1V740h-1z M254 72h1V740h-1z M264 72h1V740h-1z M274 72h1V740h-1z M284 72h1V740h-1z M294 72h1V740h-1z M304 72h1V740h-1z M314 72h1V740h-1z M324 72h1V740h-1z M334 72h1V740h-1z M344 72h1V740h-1z M354 72h1V740h-1z M364 72h1V740h-1z M374 72h1V740h-1z M384 72h1V740h-1z M394 72h1V740h-1z M404 72h1V740h-1z M414 72h1V740h-1z M424 72h1V740h-1z M435 72h1V740h-1z M445 72h1V740h-1z M455 72h1V740h-1z M465 72h1V740h-1z M475 72h1V740h-1z M485 72h1V740h-1z M495 72h1V740h-1z M505 72h1V740h-1z M515 72h1V740h-1z M525 72h1V740h-1z M535 72h1V740h-1z M545 72h1V740h-1z M555 72h1V740h-1z M565 72h1V740h-1z M575 72h1V740h-1z M585 72h1V740h-1z M595 72h1V740h-1z M605 72h1V740h-1z M615 72h1V740h-1z M625 72h1V740h-1z M636 72h1V740h-1z M646 72h1V740h-1z M656 72h1V740h-1z M666 72h1V740h-1z M676 72h1V740h-1z M686 72h1V740h-1z M696 72h1V740h-1z M706 72h1V740h-1z M716 72h1V740h-1z M726 72h1V740h-1z M736 72h1V740h-1z M746 72h1V740h-1z M756 72h1V740h-1z M766 72h1V740h-1z M776 72h1V740h-1z M786 72h1V740h-1z M796 72h1V740h-1z M806 72h1V740h-1z M816 72h1V740h-1z M826 72h1V740h-1z M837 72h1V740h-1z M847 72h1V740h-1z M857 72h1V740h-1z M867 72h1V740h-1z M877 72h1V740h-1z M887 72h1V740h-1z M897 72h1V740h-1z M907 72h1V740h-1z M917 72h1V740h-1z M927 72h1V740h-1z M937 72h1V740h-1z M947 72h1V740h-1z M957 72h1V740h-1z M967 72h1V740h-1z M977 72h1V740h-1z M987 72h1V740h-1z M997 72h1V740h-1z M1007 72h1V740h-1z M1017 72h1V740h-1z M1027 72h1V740h-1z M1038 72h1V740h-1z M1048 72h1V740h-1z M1058 72h1V740h-1z M1068 72h1V740h-1z M1078 72h1V740h-1z M1088 72h1V740h-1z M1097 72h1V740h-1z M1107 72h1V740h-1z M1117 72h1V740h-1z M1127 72h1V740h-1z M1137 72h1V740h-1z M1147 72h1V740h-1z M1157 72h1V740h-1z M1167 72h1V740h-1z M1177 72h1V740h-1z M1187 72h1V740h-1z M1197 72h1V740h-1z M1207 72h1V740h-1z M1217 72h1V740h-1z M1227 72h1V740h-1z M1238 72h1V740h-1z M1248 72h1V740h-1z M1258 72h1V740h-1z M1268 72h1V740h-1z M1278 72h1V740h-1z M1288 72h1V740h-1z M1298 72h1V740h-1z M1308 72h1V740h-1z M1318 72h1V740h-1z M1328 72h1V740h-1z M1338 72h1V740h-1z M1348 72h1V740h-1z M1358 72h1V740h-1z M177 74H1360v1H177z M177 84H1360v1H177z M177 94H1360v1H177z M177 104H1360v1H177z M177 114H1360v1H177z M177 124H1360v1H177z M177 134H1360v1H177z M177 144H1360v1H177z M177 154H1360v1H177z M177 165H1360v1H177z M177 175H1360v1H177z M177 185H1360v1H177z M177 195H1360v1H177z M177 205H1360v1H177z M177 215H1360v1H177z M177 225H1360v1H177z M177 235H1360v1H177z M177 245H1360v1H177z M177 255H1360v1H177z M177 265H1360v1H177z M177 275H1360v1H177z M177 285H1360v1H177z M177 295H1360v1H177z M177 305H1360v1H177z M177 315H1360v1H177z M177 325H1360v1H177z M177 335H1360v1H177z M177 345H1360v1H177z M177 355H1360v1H177z M177 365H1360v1H177z M177 376H1360v1H177z M177 386H1360v1H177z M177 396H1360v1H177z M177 406H1360v1H177z M177 416H1360v1H177z M177 426H1360v1H177z M177 436H1360v1H177z M177 446H1360v1H177z M177 456H1360v1H177z M177 466H1360v1H177z M177 476H1360v1H177z M177 485H1360v1H177z M177 495H1360v1H177z M177 505H1360v1H177z M177 515H1360v1H177z M177 525H1360v1H177z M177 535H1360v1H177z M177 545H1360v1H177z M177 555H1360v1H177z M177 566H1360v1H177z M177 576H1360v1H177z M177 586H1360v1H177z M177 596H1360v1H177z M177 606H1360v1H177z M177 616H1360v1H177z M177 626H1360v1H177z M177 636H1360v1H177z M177 646H1360v1H177z M177 656H1360v1H177z M177 666H1360v1H177z M177 676H1360v1H177z M177 686H1360v1H177z M177 696H1360v1H177z M177 706H1360v1H177z M177 716H1360v1H177z M177 726H1360v1H177z M177 736H1360v1H177z" fill="#C0C0B0"/>
<path d="M293 72h2V740h-2z M494 72h2V740h-2z M695 72h2V740h-2z M896 72h2V740h-2z M1096 72h2V740h-2z M1297 72h2V740h-2z M177 103H1360v2H177z M177 304H1360v2H177z M177 504H1360v2H177z M177 705H1360v2H177z" fill="#B8B8A8"/>
<g stroke="#0000C0" fill="none"><path d="M1097.5 696v21M1088 706.5h21"/><circle shape-rendering="auto" cx="1097.5" cy="706.5" r="7.3" stroke-width="1.2"/></g>
<rect x="253" y="254" width="254" height="3" fill="#004000"/>
<rect x="413" y="274" width="94" height="3" fill="#004000"/>
<rect x="253" y="254" width="3" height="134" fill="#004000"/>
<rect x="413" y="274" width="3" height="114" fill="#004000"/>
<rect x="253" y="334" width="43" height="3" fill="#004000"/>
<rect x="373" y="334" width="43" height="3" fill="#004000"/>
<rect x="253" y="465" width="3" height="52" fill="#004000"/>
<rect x="413" y="465" width="3" height="52" fill="#004000"/>
<rect x="253" y="514" width="163" height="3" fill="#004000"/>
<rect x="333" y="514" width="3" height="33" fill="#004000"/>
<rect x="314" y="544" width="41" height="3" fill="#004000"/><rect x="313" y="545" width="43" height="1" fill="#004000"/>
<rect x="324" y="554" width="21" height="3" fill="#004000"/><rect x="323" y="555" width="23" height="1" fill="#004000"/>
<rect x="333" y="565" width="4" height="3" fill="#004000"/><rect x="332" y="566" width="6" height="1" fill="#004000"/>
<rect x="946" y="395" width="33" height="3" fill="#004000"/>
<rect x="946" y="415" width="23" height="3" fill="#004000"/>
<rect x="966" y="415" width="3" height="23" fill="#004000"/>
<rect x="966" y="435" width="13" height="3" fill="#004000"/>
<rect x="545" y="195" width="362" height="461" fill="#C8C8A8"/>
<rect x="544" y="194" width="365" height="3" fill="#800000"/>
<rect x="544" y="655" width="365" height="3" fill="#800000"/>
<rect x="544" y="194" width="3" height="464" fill="#800000"/>
<rect x="906" y="194" width="3" height="464" fill="#800000"/>
<rect x="505" y="214" width="42" height="3" fill="#800000"/><rect x="504" y="215" width="1" height="1" fill="#800000"/>
<text x="555" y="221" font-size="16" fill="#000" text-anchor="start" letter-spacing="0.35" stroke="#C8C8A8" stroke-width="0.2">RESET</text>
<text x="525" y="211" font-size="15.5" fill="#000" text-anchor="end" letter-spacing="0" stroke="#E0E0D0" stroke-width="0.2">9</text>
<rect x="505" y="254" width="42" height="3" fill="#800000"/><rect x="504" y="255" width="1" height="1" fill="#800000"/>
<text x="555" y="261" font-size="16" fill="#000" text-anchor="start" letter-spacing="0.35" stroke="#C8C8A8" stroke-width="0.2">XTAL1</text>
<text x="525" y="251" font-size="15.5" fill="#000" text-anchor="end" letter-spacing="0" stroke="#E0E0D0" stroke-width="0.2">13</text>
<rect x="505" y="274" width="42" height="3" fill="#800000"/><rect x="504" y="275" width="1" height="1" fill="#800000"/>
<text x="555" y="281" font-size="16" fill="#000" text-anchor="start" letter-spacing="0.35" stroke="#C8C8A8" stroke-width="0.2">XTAL2</text>
<text x="525" y="271" font-size="15.5" fill="#000" text-anchor="end" letter-spacing="0" stroke="#E0E0D0" stroke-width="0.2">12</text>
<rect x="505" y="314" width="42" height="3" fill="#800000"/><rect x="504" y="315" width="1" height="1" fill="#800000"/>
<text x="555" y="321" font-size="16" fill="#000" text-anchor="start" letter-spacing="0.35" stroke="#C8C8A8" stroke-width="0.2">PA0/ADC0</text>
<text x="525" y="311" font-size="15.5" fill="#000" text-anchor="end" letter-spacing="0" stroke="#E0E0D0" stroke-width="0.2">40</text>
<rect x="505" y="334" width="42" height="3" fill="#800000"/><rect x="504" y="335" width="1" height="1" fill="#800000"/>
<text x="555" y="341" font-size="16" fill="#000" text-anchor="start" letter-spacing="0.35" stroke="#C8C8A8" stroke-width="0.2">PA1/ADC1</text>
<text x="525" y="331" font-size="15.5" fill="#000" text-anchor="end" letter-spacing="0" stroke="#E0E0D0" stroke-width="0.2">39</text>
<rect x="505" y="354" width="42" height="3" fill="#800000"/><rect x="504" y="355" width="1" height="1" fill="#800000"/>
<text x="555" y="361" font-size="16" fill="#000" text-anchor="start" letter-spacing="0.35" stroke="#C8C8A8" stroke-width="0.2">PA2/ADC2</text>
<text x="525" y="351" font-size="15.5" fill="#000" text-anchor="end" letter-spacing="0" stroke="#E0E0D0" stroke-width="0.2">38</text>
<rect x="505" y="375" width="42" height="3" fill="#800000"/><rect x="504" y="376" width="1" height="1" fill="#800000"/>
<text x="555" y="382" font-size="16" fill="#000" text-anchor="start" letter-spacing="0.35" stroke="#C8C8A8" stroke-width="0.2">PA3/ADC3</text>
<text x="525" y="372" font-size="15.5" fill="#000" text-anchor="end" letter-spacing="0" stroke="#E0E0D0" stroke-width="0.2">37</text>
<rect x="505" y="395" width="42" height="3" fill="#800000"/><rect x="504" y="396" width="1" height="1" fill="#800000"/>
<text x="555" y="402" font-size="16" fill="#000" text-anchor="start" letter-spacing="0.35" stroke="#C8C8A8" stroke-width="0.2">PA4/ADC4</text>
<text x="525" y="392" font-size="15.5" fill="#000" text-anchor="end" letter-spacing="0" stroke="#E0E0D0" stroke-width="0.2">36</text>
<rect x="505" y="415" width="42" height="3" fill="#800000"/><rect x="504" y="416" width="1" height="1" fill="#800000"/>
<text x="555" y="422" font-size="16" fill="#000" text-anchor="start" letter-spacing="0.35" stroke="#C8C8A8" stroke-width="0.2">PA5/ADC5</text>
<text x="525" y="412" font-size="15.5" fill="#000" text-anchor="end" letter-spacing="0" stroke="#E0E0D0" stroke-width="0.2">35</text>
<rect x="505" y="435" width="42" height="3" fill="#800000"/><rect x="504" y="436" width="1" height="1" fill="#800000"/>
<text x="555" y="442" font-size="16" fill="#000" text-anchor="start" letter-spacing="0.35" stroke="#C8C8A8" stroke-width="0.2">PA6/ADC6</text>
<text x="525" y="432" font-size="15.5" fill="#000" text-anchor="end" letter-spacing="0" stroke="#E0E0D0" stroke-width="0.2">34</text>
<rect x="505" y="455" width="42" height="3" fill="#800000"/><rect x="504" y="456" width="1" height="1" fill="#800000"/>
<text x="555" y="462" font-size="16" fill="#000" text-anchor="start" letter-spacing="0.35" stroke="#C8C8A8" stroke-width="0.2">PA7/ADC7</text>
<text x="525" y="452" font-size="15.5" fill="#000" text-anchor="end" letter-spacing="0" stroke="#E0E0D0" stroke-width="0.2">33</text>
<rect x="505" y="494" width="42" height="3" fill="#800000"/><rect x="504" y="495" width="1" height="1" fill="#800000"/>
<text x="555" y="501" font-size="16" fill="#000" text-anchor="start" letter-spacing="0.35" stroke="#C8C8A8" stroke-width="0.2">PB0/T0/XCK</text>
<text x="525" y="491" font-size="15.5" fill="#000" text-anchor="end" letter-spacing="0" stroke="#E0E0D0" stroke-width="0.2">1</text>
<rect x="505" y="514" width="42" height="3" fill="#800000"/><rect x="504" y="515" width="1" height="1" fill="#800000"/>
<text x="555" y="521" font-size="16" fill="#000" text-anchor="start" letter-spacing="0.35" stroke="#C8C8A8" stroke-width="0.2">PB1/T1</text>
<text x="525" y="511" font-size="15.5" fill="#000" text-anchor="end" letter-spacing="0" stroke="#E0E0D0" stroke-width="0.2">2</text>
<rect x="505" y="534" width="42" height="3" fill="#800000"/><rect x="504" y="535" width="1" height="1" fill="#800000"/>
<text x="555" y="541" font-size="16" fill="#000" text-anchor="start" letter-spacing="0.35" stroke="#C8C8A8" stroke-width="0.2">PB2/AIN0/INT2</text>
<text x="525" y="531" font-size="15.5" fill="#000" text-anchor="end" letter-spacing="0" stroke="#E0E0D0" stroke-width="0.2">3</text>
<rect x="505" y="554" width="42" height="3" fill="#800000"/><rect x="504" y="555" width="1" height="1" fill="#800000"/>
<text x="555" y="561" font-size="16" fill="#000" text-anchor="start" letter-spacing="0.35" stroke="#C8C8A8" stroke-width="0.2">PB3/AIN1/OC0</text>
<text x="525" y="551" font-size="15.5" fill="#000" text-anchor="end" letter-spacing="0" stroke="#E0E0D0" stroke-width="0.2">4</text>
<rect x="505" y="575" width="42" height="3" fill="#800000"/><rect x="504" y="576" width="1" height="1" fill="#800000"/>
<text x="555" y="582" font-size="16" fill="#000" text-anchor="start" letter-spacing="0.35" stroke="#C8C8A8" stroke-width="0.2">PB4/SS</text>
<text x="525" y="572" font-size="15.5" fill="#000" text-anchor="end" letter-spacing="0" stroke="#E0E0D0" stroke-width="0.2">5</text>
<rect x="505" y="595" width="42" height="3" fill="#800000"/><rect x="504" y="596" width="1" height="1" fill="#800000"/>
<text x="555" y="602" font-size="16" fill="#000" text-anchor="start" letter-spacing="0.35" stroke="#C8C8A8" stroke-width="0.2">PB5/MOSI</text>
<text x="525" y="592" font-size="15.5" fill="#000" text-anchor="end" letter-spacing="0" stroke="#E0E0D0" stroke-width="0.2">6</text>
<rect x="505" y="615" width="42" height="3" fill="#800000"/><rect x="504" y="616" width="1" height="1" fill="#800000"/>
<text x="555" y="622" font-size="16" fill="#000" text-anchor="start" letter-spacing="0.35" stroke="#C8C8A8" stroke-width="0.2">PB6/MISO</text>
<text x="525" y="612" font-size="15.5" fill="#000" text-anchor="end" letter-spacing="0" stroke="#E0E0D0" stroke-width="0.2">7</text>
<rect x="505" y="635" width="42" height="3" fill="#800000"/><rect x="504" y="636" width="1" height="1" fill="#800000"/>
<text x="555" y="642" font-size="16" fill="#000" text-anchor="start" letter-spacing="0.35" stroke="#C8C8A8" stroke-width="0.2">PB7/SCK</text>
<text x="525" y="632" font-size="15.5" fill="#000" text-anchor="end" letter-spacing="0" stroke="#E0E0D0" stroke-width="0.2">8</text>
<rect x="555" y="206" width="55" height="1" fill="#000"/>
<rect x="591" y="567" width="24" height="1" fill="#000"/>
<rect x="906" y="214" width="42" height="3" fill="#800000"/><rect x="948" y="215" width="1" height="1" fill="#800000"/>
<text x="896.35" y="221" font-size="16" fill="#000" text-anchor="end" letter-spacing="0.35" stroke="#C8C8A8" stroke-width="0.2">PC0/SCL</text>
<text x="928" y="211" font-size="15.5" fill="#000" text-anchor="start" letter-spacing="0" stroke="#E0E0D0" stroke-width="0.2">22</text>
<rect x="906" y="234" width="42" height="3" fill="#800000"/><rect x="948" y="235" width="1" height="1" fill="#800000"/>
<text x="896.35" y="241" font-size="16" fill="#000" text-anchor="end" letter-spacing="0.35" stroke="#C8C8A8" stroke-width="0.2">PC1/SDA</text>
<text x="928" y="231" font-size="15.5" fill="#000" text-anchor="start" letter-spacing="0" stroke="#E0E0D0" stroke-width="0.2">23</text>
<rect x="906" y="254" width="42" height="3" fill="#800000"/><rect x="948" y="255" width="1" height="1" fill="#800000"/>
<text x="896.35" y="261" font-size="16" fill="#000" text-anchor="end" letter-spacing="0.35" stroke="#C8C8A8" stroke-width="0.2">PC2/TCK</text>
<text x="928" y="251" font-size="15.5" fill="#000" text-anchor="start" letter-spacing="0" stroke="#E0E0D0" stroke-width="0.2">24</text>
<rect x="906" y="274" width="42" height="3" fill="#800000"/><rect x="948" y="275" width="1" height="1" fill="#800000"/>
<text x="896.35" y="281" font-size="16" fill="#000" text-anchor="end" letter-spacing="0.35" stroke="#C8C8A8" stroke-width="0.2">PC3/TMS</text>
<text x="928" y="271" font-size="15.5" fill="#000" text-anchor="start" letter-spacing="0" stroke="#E0E0D0" stroke-width="0.2">25</text>
<rect x="906" y="294" width="42" height="3" fill="#800000"/><rect x="948" y="295" width="1" height="1" fill="#800000"/>
<text x="896.35" y="301" font-size="16" fill="#000" text-anchor="end" letter-spacing="0.35" stroke="#C8C8A8" stroke-width="0.2">PC4/TDO</text>
<text x="928" y="291" font-size="15.5" fill="#000" text-anchor="start" letter-spacing="0" stroke="#E0E0D0" stroke-width="0.2">26</text>
<rect x="906" y="314" width="42" height="3" fill="#800000"/><rect x="948" y="315" width="1" height="1" fill="#800000"/>
<text x="896.35" y="321" font-size="16" fill="#000" text-anchor="end" letter-spacing="0.35" stroke="#C8C8A8" stroke-width="0.2">PC5/TDI</text>
<text x="928" y="311" font-size="15.5" fill="#000" text-anchor="start" letter-spacing="0" stroke="#E0E0D0" stroke-width="0.2">27</text>
<rect x="906" y="334" width="42" height="3" fill="#800000"/><rect x="948" y="335" width="1" height="1" fill="#800000"/>
<text x="896.35" y="341" font-size="16" fill="#000" text-anchor="end" letter-spacing="0.35" stroke="#C8C8A8" stroke-width="0.2">PC6/TOSC1</text>
<text x="928" y="331" font-size="15.5" fill="#000" text-anchor="start" letter-spacing="0" stroke="#E0E0D0" stroke-width="0.2">28</text>
<rect x="906" y="354" width="42" height="3" fill="#800000"/><rect x="948" y="355" width="1" height="1" fill="#800000"/>
<text x="896.35" y="361" font-size="16" fill="#000" text-anchor="end" letter-spacing="0.35" stroke="#C8C8A8" stroke-width="0.2">PC7/TOSC2</text>
<text x="928" y="351" font-size="15.5" fill="#000" text-anchor="start" letter-spacing="0" stroke="#E0E0D0" stroke-width="0.2">29</text>
<rect x="906" y="395" width="42" height="3" fill="#800000"/><rect x="948" y="396" width="1" height="1" fill="#800000"/>
<text x="896.35" y="402" font-size="16" fill="#000" text-anchor="end" letter-spacing="0.35" stroke="#C8C8A8" stroke-width="0.2">PD0/RXD</text>
<text x="928" y="392" font-size="15.5" fill="#000" text-anchor="start" letter-spacing="0" stroke="#E0E0D0" stroke-width="0.2">14</text>
<rect x="906" y="415" width="42" height="3" fill="#800000"/><rect x="948" y="416" width="1" height="1" fill="#800000"/>
<text x="896.35" y="422" font-size="16" fill="#000" text-anchor="end" letter-spacing="0.35" stroke="#C8C8A8" stroke-width="0.2">PD1/TXD</text>
<text x="928" y="412" font-size="15.5" fill="#000" text-anchor="start" letter-spacing="0" stroke="#E0E0D0" stroke-width="0.2">15</text>
<rect x="906" y="435" width="42" height="3" fill="#800000"/><rect x="948" y="436" width="1" height="1" fill="#800000"/>
<text x="896.35" y="442" font-size="16" fill="#000" text-anchor="end" letter-spacing="0.35" stroke="#C8C8A8" stroke-width="0.2">PD2/INT0</text>
<text x="928" y="432" font-size="15.5" fill="#000" text-anchor="start" letter-spacing="0" stroke="#E0E0D0" stroke-width="0.2">16</text>
<rect x="906" y="455" width="42" height="3" fill="#800000"/><rect x="948" y="456" width="1" height="1" fill="#800000"/>
<text x="896.35" y="462" font-size="16" fill="#000" text-anchor="end" letter-spacing="0.35" stroke="#C8C8A8" stroke-width="0.2">PD3/INT1</text>
<text x="928" y="452" font-size="15.5" fill="#000" text-anchor="start" letter-spacing="0" stroke="#E0E0D0" stroke-width="0.2">17</text>
<rect x="906" y="475" width="42" height="3" fill="#800000"/><rect x="948" y="476" width="1" height="1" fill="#800000"/>
<text x="896.35" y="482" font-size="16" fill="#000" text-anchor="end" letter-spacing="0.35" stroke="#C8C8A8" stroke-width="0.2">PD4/OC1B</text>
<text x="928" y="472" font-size="15.5" fill="#000" text-anchor="start" letter-spacing="0" stroke="#E0E0D0" stroke-width="0.2">18</text>
<rect x="906" y="494" width="42" height="3" fill="#800000"/><rect x="948" y="495" width="1" height="1" fill="#800000"/>
<text x="896.35" y="501" font-size="16" fill="#000" text-anchor="end" letter-spacing="0.35" stroke="#C8C8A8" stroke-width="0.2">PD5/OC1A</text>
<text x="928" y="491" font-size="15.5" fill="#000" text-anchor="start" letter-spacing="0" stroke="#E0E0D0" stroke-width="0.2">19</text>
<rect x="906" y="514" width="42" height="3" fill="#800000"/><rect x="948" y="515" width="1" height="1" fill="#800000"/>
<text x="896.35" y="521" font-size="16" fill="#000" text-anchor="end" letter-spacing="0.35" stroke="#C8C8A8" stroke-width="0.2">PD6/ICP1</text>
<text x="928" y="511" font-size="15.5" fill="#000" text-anchor="start" letter-spacing="0" stroke="#E0E0D0" stroke-width="0.2">20</text>
<rect x="906" y="534" width="42" height="3" fill="#800000"/><rect x="948" y="535" width="1" height="1" fill="#800000"/>
<text x="896.35" y="541" font-size="16" fill="#000" text-anchor="end" letter-spacing="0.35" stroke="#C8C8A8" stroke-width="0.2">PD7/OC2</text>
<text x="928" y="531" font-size="15.5" fill="#000" text-anchor="start" letter-spacing="0" stroke="#E0E0D0" stroke-width="0.2">21</text>
<rect x="906" y="615" width="42" height="3" fill="#800000"/><rect x="948" y="616" width="1" height="1" fill="#800000"/>
<text x="896.35" y="622" font-size="16" fill="#000" text-anchor="end" letter-spacing="0.35" stroke="#C8C8A8" stroke-width="0.2">AREF</text>
<text x="928" y="612" font-size="15.5" fill="#000" text-anchor="start" letter-spacing="0" stroke="#E0E0D0" stroke-width="0.2">32</text>
<rect x="906" y="635" width="42" height="3" fill="#800000"/><rect x="948" y="636" width="1" height="1" fill="#800000"/>
<text x="896.35" y="642" font-size="16" fill="#000" text-anchor="end" letter-spacing="0.35" stroke="#C8C8A8" stroke-width="0.2">AVCC</text>
<text x="928" y="632" font-size="15.5" fill="#000" text-anchor="start" letter-spacing="0" stroke="#E0E0D0" stroke-width="0.2">30</text>
<text x="543" y="188" font-size="25" fill="#000" text-anchor="start" letter-spacing="0" stroke="#E0E0D0" stroke-width="0.2">U1</text>
<text x="543" y="673" font-size="16" fill="#000" text-anchor="start" letter-spacing="0.35" stroke="#E0E0D0" stroke-width="0.2">ATMEGA16</text>
<text x="543" y="693" font-size="16" fill="#808080" text-anchor="start" letter-spacing="0.35" stroke="#E0E0D0" stroke-width="0.2">&lt;TEXT&gt;</text>
<rect x="294" y="334" width="21" height="3" fill="#800000"/><rect x="293" y="335" width="23" height="1" fill="#800000"/>
<rect x="354" y="334" width="21" height="3" fill="#800000"/><rect x="353" y="335" width="23" height="1" fill="#800000"/>
<rect x="313" y="305" width="3" height="62" fill="#800000"/><rect x="314" y="304" width="1" height="64" fill="#800000"/>
<rect x="353" y="305" width="3" height="62" fill="#800000"/><rect x="354" y="304" width="1" height="64" fill="#800000"/>
<rect x="324" y="315" width="20" height="40" fill="#C8C8A8"/>
<rect x="323" y="314" width="23" height="3" fill="#800000"/>
<rect x="323" y="354" width="23" height="3" fill="#800000"/>
<rect x="323" y="314" width="3" height="43" fill="#800000"/>
<rect x="343" y="314" width="3" height="43" fill="#800000"/>
<text x="312" y="299" font-size="25" fill="#000" text-anchor="start" letter-spacing="0" stroke="#E0E0D0" stroke-width="0.2">X1</text>
<text x="312" y="382" font-size="16" fill="#000" text-anchor="start" letter-spacing="0.35" stroke="#E0E0D0" stroke-width="0.2">CRYSTAL</text>
<text x="312" y="402" font-size="16" fill="#808080" text-anchor="start" letter-spacing="0.35" stroke="#E0E0D0" stroke-width="0.2">&lt;TEXT&gt;</text>
<rect x="253" y="385" width="3" height="37" fill="#800000"/>
<rect x="253" y="431" width="3" height="37" fill="#800000"/>
<rect x="234" y="419" width="41" height="3" fill="#800000"/><rect x="233" y="420" width="43" height="1" fill="#800000"/>
<rect x="234" y="431" width="41" height="3" fill="#800000"/><rect x="233" y="432" width="43" height="1" fill="#800000"/>
<text x="285" y="427" font-size="25" fill="#000" text-anchor="start" letter-spacing="0" stroke="#E0E0D0" stroke-width="0.2">C1</text>
<text x="285" y="449" font-size="16" fill="#000" text-anchor="start" letter-spacing="0.35" stroke="#E0E0D0" stroke-width="0.2">18pF</text>
<text x="285" y="469" font-size="16" fill="#808080" text-anchor="start" letter-spacing="0.35" stroke="#E0E0D0" stroke-width="0.2">&lt;TEXT&gt;</text>
<rect x="413" y="385" width="3" height="37" fill="#800000"/>
<rect x="413" y="431" width="3" height="37" fill="#800000"/>
<rect x="394" y="419" width="41" height="3" fill="#800000"/><rect x="393" y="420" width="43" height="1" fill="#800000"/>
<rect x="394" y="431" width="41" height="3" fill="#800000"/><rect x="393" y="432" width="43" height="1" fill="#800000"/>
<text x="446" y="427" font-size="25" fill="#000" text-anchor="start" letter-spacing="0" stroke="#E0E0D0" stroke-width="0.2">C2</text>
<text x="446" y="449" font-size="16" fill="#000" text-anchor="start" letter-spacing="0.35" stroke="#E0E0D0" stroke-width="0.2">18pF</text>
<text x="446" y="469" font-size="16" fill="#808080" text-anchor="start" letter-spacing="0.35" stroke="#E0E0D0" stroke-width="0.2">&lt;TEXT&gt;</text>
<rect x="1017" y="295" width="241" height="161" fill="#C8C8A8"/>
<rect x="1016" y="294" width="244" height="3" fill="#800000"/>
<rect x="1016" y="455" width="244" height="3" fill="#800000"/>
<rect x="1016" y="294" width="3" height="164" fill="#800000"/>
<rect x="1257" y="294" width="3" height="164" fill="#800000"/>
<rect x="1077" y="314" width="162" height="123" fill="#800000"/><rect x="1079" y="316" width="158" height="119" fill="#000"/>
<rect x="1088" y="416" width="9" height="10" fill="#00FF00"/>
<rect x="977" y="314" width="42" height="3" fill="#800000"/><rect x="976" y="315" width="1" height="1" fill="#800000"/>
<text x="1027" y="321" font-size="16" fill="#000" text-anchor="start" letter-spacing="0.35" stroke="#C8C8A8" stroke-width="0.2">CTS</text>
<rect x="977" y="354" width="42" height="3" fill="#800000"/><rect x="976" y="355" width="1" height="1" fill="#800000"/>
<text x="1027" y="361" font-size="16" fill="#000" text-anchor="start" letter-spacing="0.35" stroke="#C8C8A8" stroke-width="0.2">RTS</text>
<rect x="977" y="395" width="42" height="3" fill="#800000"/><rect x="976" y="396" width="1" height="1" fill="#800000"/>
<text x="1027" y="402" font-size="16" fill="#000" text-anchor="start" letter-spacing="0.35" stroke="#C8C8A8" stroke-width="0.2">TXD</text>
<rect x="977" y="435" width="42" height="3" fill="#800000"/><rect x="976" y="436" width="1" height="1" fill="#800000"/>
<text x="1027" y="442" font-size="16" fill="#000" text-anchor="start" letter-spacing="0.35" stroke="#C8C8A8" stroke-width="0.2">RXD</text>
<circle shape-rendering="auto" cx="254.2" cy="335.4" r="5.2" fill="#004000"/>
<circle shape-rendering="auto" cx="414.2" cy="335.4" r="5.2" fill="#004000"/>
<circle shape-rendering="auto" cx="334.2" cy="515.4" r="5.2" fill="#004000"/>
<rect x="2" y="746" width="1" height="19" fill="#FFFFFF"/>
<rect x="4" y="746" width="1" height="19" fill="#808080"/>
<rect x="2" y="765" width="3" height="1" fill="#808080"/>
<rect x="9" y="746" width="159" height="1" fill="#808080"/>
<rect x="9" y="746" width="1" height="19" fill="#808080"/>
<rect x="10" y="747" width="157" height="18" fill="#000000" />
<rect x="9" y="765" width="159" height="1" fill="#FFFFFF"/>
<rect x="11" y="748" width="38" height="16" fill="#D4D0C8" />
<rect x="11" y="748" width="38" height="2" fill="#FFFFFF" />
<rect x="11" y="748" width="2" height="16" fill="#FFFFFF" />
<rect x="13" y="762" width="36" height="2" fill="#808080" />
<rect x="47" y="750" width="2" height="14" fill="#808080" />
<rect x="50" y="748" width="38" height="16" fill="#D4D0C8" />
<rect x="50" y="748" width="38" height="2" fill="#FFFFFF" />
<rect x="50" y="748" width="2" height="16" fill="#FFFFFF" />
<rect x="52" y="762" width="36" height="2" fill="#808080" />
<rect x="86" y="750" width="2" height="14" fill="#808080" />
<rect x="89" y="748" width="38" height="16" fill="#D4D0C8" />
<rect x="89" y="748" width="38" height="2" fill="#FFFFFF" />
<rect x="89" y="748" width="2" height="16" fill="#FFFFFF" />
<rect x="91" y="762" width="36" height="2" fill="#808080" />
<rect x="125" y="750" width="2" height="14" fill="#808080" />
<rect x="128" y="748" width="38" height="16" fill="#D4D0C8" />
<rect x="128" y="748" width="38" height="2" fill="#FFFFFF" />
<rect x="128" y="748" width="2" height="16" fill="#FFFFFF" />
<rect x="130" y="762" width="36" height="2" fill="#808080" />
<rect x="164" y="750" width="2" height="14" fill="#808080" />
<path d="M27 750v11l7-5.5z" fill="#000"/>
<rect x="62" y="750" width="2" height="11" fill="#000"/><path d="M66 750v11l7-5.5z" fill="#000"/>
<rect x="103" y="750" width="3" height="11" fill="#000"/><rect x="109" y="750" width="3" height="11" fill="#000"/>
<rect x="141" y="750" width="11" height="11" fill="#000"/>
<rect x="172" y="746" width="98" height="1" fill="#808080"/>
<rect x="172" y="746" width="1" height="19" fill="#808080"/>
<rect x="172" y="764" width="98" height="1" fill="#FFFFFF"/>
<rect x="269" y="746" width="1" height="19" fill="#FFFFFF"/>
<path d="M183 749l7.5 13h-15z" fill="#F8E000" stroke="#404000" stroke-width="0.6"/><rect x="182" y="752" width="2" height="6" fill="#000"/><rect x="182" y="759" width="2" height="2" fill="#000"/>
<text x="196" y="760" font-size="12.5" fill="#000" text-anchor="start" font-weight="normal" textLength="70" lengthAdjust="spacingAndGlyphs" stroke="#D4D0C8" stroke-width="0.15">16 Message(s)</text>
<rect x="277" y="746" width="1" height="20" fill="#FFFFFF"/>
<rect x="279" y="746" width="1" height="20" fill="#808080"/>
<rect x="277" y="765" width="3" height="1" fill="#808080"/>
<rect x="286" y="748" width="936" height="1" fill="#808080"/>
<rect x="286" y="748" width="1" height="15" fill="#808080"/>
<rect x="286" y="762" width="936" height="1" fill="#FFFFFF"/>
<rect x="1221" y="748" width="1" height="15" fill="#FFFFFF"/>
<text x="288" y="760" font-size="12.5" fill="#000" text-anchor="start" font-weight="normal" textLength="446" lengthAdjust="spacingAndGlyphs" stroke="#D4D0C8" stroke-width="0.15">COMPONENT U1, Value=ATMEGA16, Module=&lt;NONE&gt;. Device=ATMEGA16, Pinout=DIL40</text>
<rect x="1226" y="742" width="1" height="26" fill="#808080"/>
<rect x="1227" y="742" width="1" height="26" fill="#FFFFFF"/>
<rect x="1230" y="746" width="1" height="20" fill="#FFFFFF"/>
<rect x="1232" y="746" width="1" height="20" fill="#808080"/>
<rect x="1230" y="765" width="3" height="1" fill="#808080"/>
<rect x="1237" y="748" width="125" height="1" fill="#808080"/>
<rect x="1237" y="748" width="1" height="15" fill="#808080"/>
<rect x="1237" y="762" width="125" height="1" fill="#FFFFFF"/>
<rect x="1361" y="748" width="1" height="15" fill="#FFFFFF"/>
<text x="1249" y="760" font-size="12.5" fill="#000" text-anchor="start" font-weight="normal" textLength="35" lengthAdjust="spacingAndGlyphs" stroke="#D4D0C8" stroke-width="0.15">-1000.0</text>
<text x="1295" y="760" font-size="12.5" fill="#000" text-anchor="start" font-weight="normal" textLength="38" lengthAdjust="spacingAndGlyphs" stroke="#D4D0C8" stroke-width="0.15">+1550.0</text>
<text x="1350" y="760" font-size="12.5" fill="#000080" text-anchor="start" font-weight="normal" textLength="9" lengthAdjust="spacingAndGlyphs" stroke="#D4D0C8" stroke-width="0.15">th</text>
</svg></body></html>
